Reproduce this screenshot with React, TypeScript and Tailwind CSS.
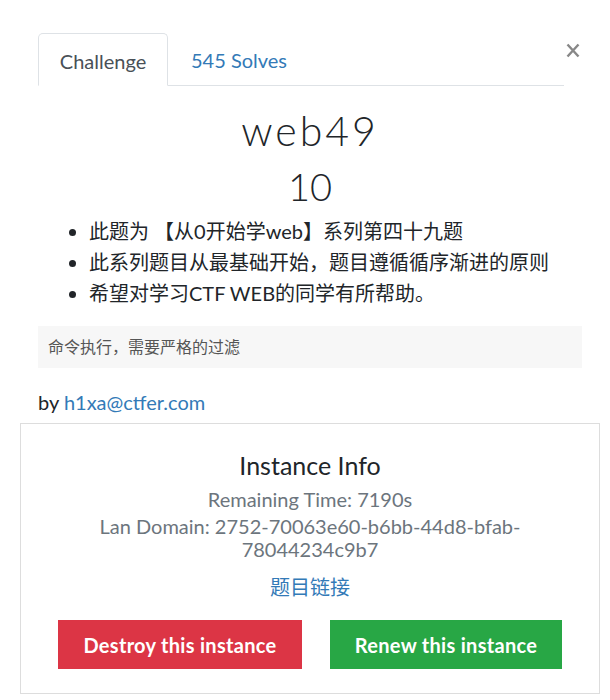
import React from "react";

export default function App() {
  return (
    <div
      className="w-[610px] h-[700px] bg-white overflow-hidden text-[#212529]"
      style={{ fontFamily: "Lato, 'Noto Sans CJK SC', sans-serif" }}
    >
      <div className="pl-[38px] pr-[28px] pt-[33px] flex items-start">
        <div className="flex-1 flex border-b border-[#dee2e6] h-[53px]">
          <div className="w-[130px] h-[53px] -mb-px border border-[#dee2e6] border-b-white rounded-t-[5px] bg-white flex items-center justify-center pt-[2px] text-[20px] text-[#495057]">
            Challenge
          </div>
          <div className="pl-[23px] h-[52px] flex items-center pt-[2px] text-[20px] text-[#337ab7]">
            545 Solves
          </div>
        </div>
        <div className="w-[18px] pt-[10px] flex justify-center">
          <svg width="14" height="15" viewBox="0 0 14 15">
            <path d="M1.5 1.5 L12.5 13.5 M12.5 1.5 L1.5 13.5" stroke="#888" strokeWidth="2.4" strokeLinecap="butt" />
          </svg>
        </div>
      </div>

      <div className="pl-[38px] pr-[28px]">
        <div className="text-center text-[41px] leading-none mt-[24px] tracking-[3px] font-light">
          web49
        </div>
        <div className="text-center text-[38px] leading-none mt-[16px] font-light">10</div>
        <ul className="list-disc pl-[51px] mt-[11px] text-[20px] leading-[31px] text-[#212529]">
          <li>此题为 【从0开始学web】系列第四十九题</li>
          <li>此系列题目从最基础开始，题目遵循循序渐进的原则</li>
          <li>希望对学习CTF WEB的同学有所帮助。</li>
        </ul>
        <div className="mt-[17px] bg-[#f7f7f7] h-[42px] flex items-center px-[10px] text-[16px] text-[#555]">
          命令执行，需要严格的过滤
        </div>
        <div className="mt-[22px] text-[20px] leading-[24px]">
          by <span className="text-[#337ab7]">h1xa@ctfer.com</span>
        </div>
      </div>

      <div className="ml-[20px] w-[580px] mt-[9px] border border-[#dddddd] h-[271px] flex flex-col items-center">
        <div className="mt-[26px] text-[25px] leading-[30px]">Instance Info</div>
        <div className="mt-[7px] text-[20px] leading-[24px] text-[#6c757d]">Remaining Time: 7190s</div>
        <div className="mt-[4px] text-[20px] leading-[23px] text-[#6c757d] text-center w-[430px]">
          Lan Domain: 2752-70063e60-b6bb-44d8-bfab-78044234c9b7
        </div>
        <div className="mt-[14px] text-[20px] leading-[24px] text-[#337ab7]">题目链接</div>
        <div className="mt-[21px] flex gap-[28px]">
          <div className="w-[244px] h-[49px] bg-[#dc3545] text-white font-bold text-[20px] tracking-[0.3px] flex items-center justify-center">
            Destroy this instance
          </div>
          <div className="w-[232px] h-[49px] bg-[#28a745] text-white font-bold text-[20px] tracking-[0.3px] flex items-center justify-center">
            Renew this instance
          </div>
        </div>
      </div>
    </div>
  );
}
